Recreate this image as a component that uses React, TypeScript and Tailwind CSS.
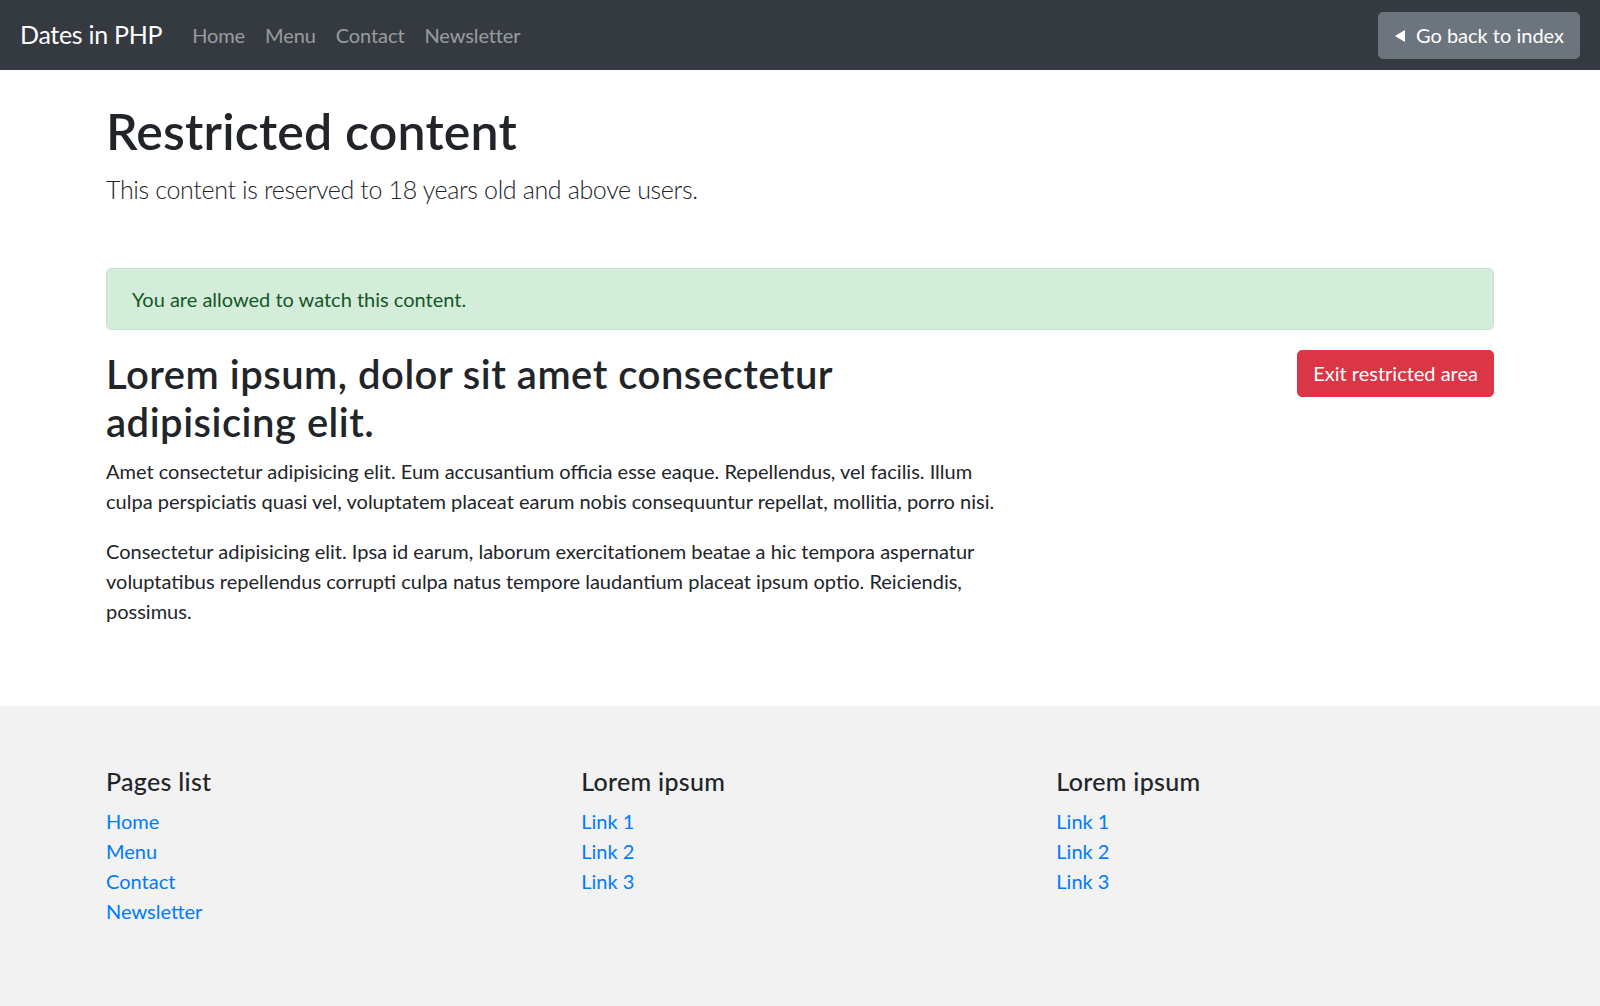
export default function App() {
  const pages = ["Home", "Menu", "Contact", "Newsletter"];
  const links = ["Link 1", "Link 2", "Link 3"];

  return (
    <div className="min-h-screen bg-white font-['Lato','Liberation_Sans',sans-serif] text-[20px] leading-[30px] text-[#212529]">
      {/* navbar */}
      <nav className="flex h-[70px] items-center justify-between bg-[#343a40] px-5">
        <div className="flex items-center">
          <a href="#" className="mr-5 text-[25px] leading-[37.5px] tracking-[-0.3px] text-white">
            Dates in PHP
          </a>
          {pages.map((p) => (
            <a key={p} href="#" className="px-[10px] py-[10px] tracking-[-0.1px] text-white/50">
              {p}
            </a>
          ))}
        </div>
        <button className="flex items-center gap-[10px] rounded-[5px] border border-[#6c757d] bg-[#6c757d] px-[15px] py-[7.5px] leading-[30px] text-white">
          <svg width="12" height="14" viewBox="0 0 12 14" className="mt-[1px]">
            <polygon points="11,1 11,13 1,7" fill="currentColor" />
          </svg>
          Go back to index
        </button>
      </nav>

      {/* main */}
      <main className="px-[106px] pb-[60px]">
        <h1 className="mt-[31px] mb-[10px] text-[50px] font-semibold leading-[1.2] tracking-[0.2px]">Restricted content</h1>
        <p className="text-[25px] font-light leading-[37.5px] tracking-[-0.35px]">
          This content is reserved to 18 years old and above users.
        </p>

        <div className="mt-[59px] mb-[20px] rounded-[5px] border border-[#c3e6cb] bg-[#d4edda] px-[25px] py-[15px] text-[#155724]">
          You are allowed to watch this content.
        </div>

        <div className="flex">
          <div className="w-[912px]">
            <h2 className="mb-[10px] text-[40px] font-semibold leading-[48px] tracking-[0.5px]">
              Lorem ipsum, dolor sit amet consectetur adipisicing elit.
            </h2>
            <p className="mb-[20px]">
              Amet consectetur adipisicing elit. Eum accusantium officia esse eaque. Repellendus, vel facilis. Illum culpa
              perspiciatis quasi vel, voluptatem placeat earum nobis consequuntur repellat, mollitia, porro nisi.
            </p>
            <p className="mb-[20px]">
              Consectetur adipisicing elit. Ipsa id earum, laborum exercitationem beatae a hic tempora aspernatur
              voluptatibus repellendus corrupti culpa natus tempore laudantium placeat ipsum optio. Reiciendis, possimus.
            </p>
          </div>
          <div className="flex flex-1 items-start justify-end">
            <button className="rounded-[5px] border border-[#dc3545] bg-[#dc3545] px-[15px] py-[7.5px] leading-[30px] text-white">
              Exit restricted area
            </button>
          </div>
        </div>
      </main>

      {/* footer */}
      <footer className="bg-[#f2f2f2] px-[106px] pt-[60px] pb-[60px]">
        <div className="grid grid-cols-3 gap-x-[37.5px]">
          <div>
            <h5 className="mb-[10px] text-[25px] font-medium leading-[30px] tracking-[0.3px]">Pages list</h5>
            <ul className="mb-[20px]">
              {pages.map((p) => (
                <li key={p}>
                  <a href="#" className="text-[#007bff]">{p}</a>
                </li>
              ))}
            </ul>
          </div>
          {[0, 1].map((i) => (
            <div key={i}>
              <h5 className="mb-[10px] text-[25px] font-medium leading-[30px] tracking-[0.3px]">Lorem ipsum</h5>
              <ul className="mb-[20px]">
                {links.map((l) => (
                  <li key={l}>
                    <a href="#" className="text-[#007bff]">{l}</a>
                  </li>
                ))}
              </ul>
            </div>
          ))}
        </div>
      </footer>
    </div>
  );
}
